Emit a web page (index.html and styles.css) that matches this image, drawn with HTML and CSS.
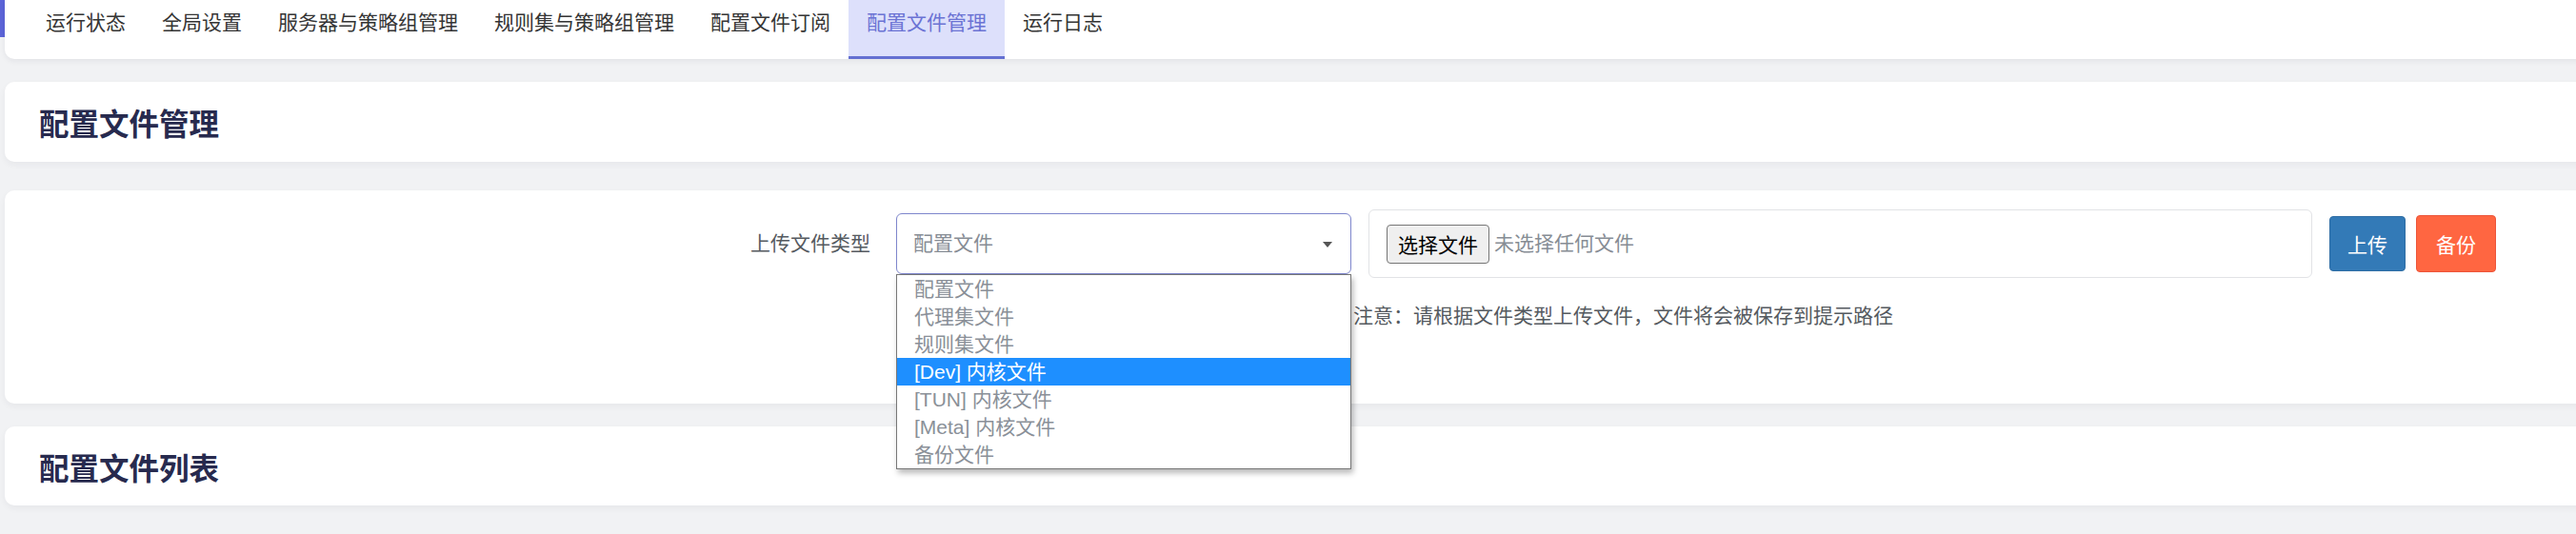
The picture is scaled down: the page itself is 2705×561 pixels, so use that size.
FILE: index.html
```html
<!DOCTYPE html>
<html lang="zh-CN">
<head>
<meta charset="utf-8">
<title>配置文件管理</title>
<link rel="stylesheet" href="styles.css">
</head>
<body>
<div class="app">
  <div class="rail"><div class="rail-mark"></div></div>
  <div class="main">
    <nav class="card nav">
      <a class="tab">运行状态</a>
      <a class="tab">全局设置</a>
      <a class="tab">服务器与策略组管理</a>
      <a class="tab">规则集与策略组管理</a>
      <a class="tab">配置文件订阅</a>
      <a class="tab active">配置文件管理</a>
      <a class="tab">运行日志</a>
    </nav>

    <section class="card head head-top">
      <h2 class="title">配置文件管理</h2>
    </section>

    <section class="card upload">
      <div class="upload-row">
        <label class="field-label">上传文件类型</label>
        <div class="select">
          <span class="select-value">配置文件</span>
          <span class="caret"></span>
          <ul class="options">
            <li class="option">配置文件</li>
            <li class="option">代理集文件</li>
            <li class="option">规则集文件</li>
            <li class="option selected">[Dev] 内核文件</li>
            <li class="option">[TUN] 内核文件</li>
            <li class="option">[Meta] 内核文件</li>
            <li class="option">备份文件</li>
          </ul>
        </div>
        <div class="file-box">
          <span class="file-btn">选择文件</span>
          <span class="file-name">未选择任何文件</span>
        </div>
        <button class="btn btn-upload">上传</button>
        <button class="btn btn-backup">备份</button>
      </div>
      <p class="note">注意：请根据文件类型上传文件，文件将会被保存到提示路径</p>
    </section>

    <section class="card head head-list">
      <h2 class="title">配置文件列表</h2>
    </section>
  </div>
</div>
</body>
</html>
```

FILE: styles.css
```css
* { box-sizing: border-box; }

html, body {
  margin: 0;
  padding: 0;
  overflow: hidden;
  background: #f1f2f4;
  font-family: "Liberation Sans", "Noto Sans CJK SC", sans-serif;
  color: #333;
}

.app {
  display: flex;
  align-items: flex-start;
  min-height: 561px;
}

.rail {
  flex: 0 0 5px;
  width: 5px;
}

.rail-mark {
  height: 39px;
  background: #5c64d8;
}

.main {
  flex: 1;
  margin-right: -14px;
  display: flex;
  flex-direction: column;
}

.card {
  background: #ffffff;
  border-radius: 10px;
  box-shadow: 0 3px 7px rgba(30, 35, 60, 0.05);
}

/* navigation */
.nav {
  display: flex;
  height: 62px;
  padding-left: 24px;
  border-radius: 0 0 10px 10px;
  box-shadow: 0 2px 6px rgba(30, 35, 60, 0.07);
}

.tab {
  display: block;
  height: 62px;
  padding: 9px 19px 0;
  font-size: 21px;
  line-height: 30px;
  color: #353535;
  border-bottom: 3px solid transparent;
  white-space: nowrap;
}

.tab.active {
  background: #dde0fb;
  color: #6b73d4;
  border-bottom-color: #6470d2;
}

/* section headers */
.head {
  display: flex;
  align-items: center;
  padding-left: 36px;
}

.head-top {
  margin-top: 24px;
  height: 84px;
}

.head-list {
  margin-top: 24px;
  height: 83px;
}

.title {
  margin: 0;
  font-size: 31.5px;
  line-height: 40px;
  font-weight: 700;
  color: #272a4e;
  font-family: "Noto Sans CJK SC", sans-serif;
}

/* upload card */
.upload {
  margin-top: 30px;
  height: 224px;
  padding-top: 20px;
}

.upload-row {
  display: flex;
  align-items: center;
  height: 72px;
}

.field-label {
  flex: 0 0 909px;
  text-align: right;
  margin-right: 27px;
  font-size: 21px;
  line-height: 30px;
  color: #555a60;
}

.select {
  position: relative;
  flex: 0 0 478px;
  height: 64px;
  border: 1px solid #7e86cc;
  border-radius: 6px;
  display: flex;
  align-items: center;
  justify-content: space-between;
  padding: 0 19px 0 17px;
  background: #fff;
}

.select-value {
  font-size: 21px;
  line-height: 30px;
  color: #878d95;
}

.caret {
  width: 0;
  height: 0;
  border-left: 5px solid transparent;
  border-right: 5px solid transparent;
  border-top: 6px solid #555;
  margin-top: 2px;
}

.options {
  position: absolute;
  top: 63px;
  left: -1px;
  width: 478px;
  margin: 0;
  padding: 0;
  list-style: none;
  background: #fff;
  border: 1px solid #777;
  box-shadow: 2px 4px 6px rgba(0, 0, 0, 0.28);
  z-index: 5;
}

.option {
  height: 29px;
  line-height: 29px;
  padding-left: 18px;
  font-size: 21px;
  color: #8a9098;
  white-space: nowrap;
}

.option.selected {
  background: #1e8fff;
  color: #ffffff;
}

.file-box {
  flex: 0 0 991px;
  height: 72px;
  margin-left: 18px;
  border: 1px solid #e2e3e6;
  border-radius: 6px;
  display: flex;
  align-items: center;
  padding-left: 18px;
}

.file-btn {
  height: 41px;
  padding: 0 11px;
  display: flex;
  align-items: center;
  background: #efefef;
  border: 1px solid #767676;
  border-radius: 4px;
  font-size: 21px;
  color: #000;
}

.file-name {
  margin-left: 5px;
  font-size: 21px;
  line-height: 30px;
  color: #878d95;
}

.btn {
  height: 58px;
  border-radius: 4px;
  font-family: "Noto Sans CJK SC", sans-serif;
  font-size: 21px;
  color: #fff;
  padding: 0;
}

.btn-upload {
  width: 80px;
  margin-left: 18px;
  background: #337ab7;
  border: 1px solid #2e6da4;
}

.btn-backup {
  width: 84px;
  height: 60px;
  margin-left: 11px;
  background: #ff6641;
  border: 1px solid #ec553a;
}

.note {
  margin: 25px 0 0 1416px;
  font-size: 21px;
  line-height: 30px;
  color: #555a60;
  white-space: nowrap;
}
```
